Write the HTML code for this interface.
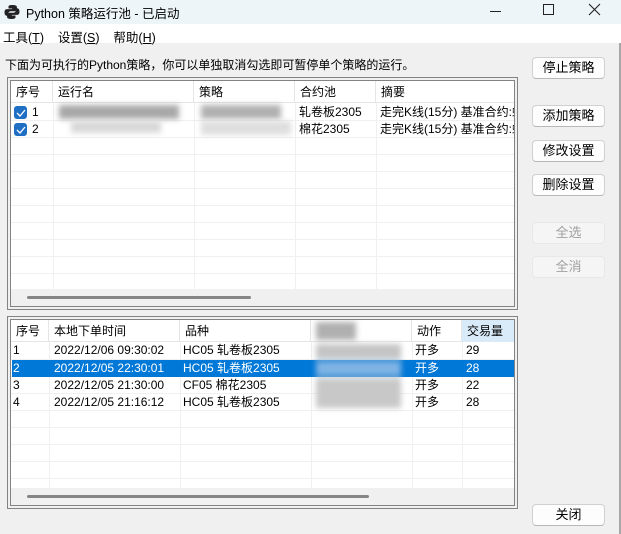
<!DOCTYPE html>
<html><head><meta charset="utf-8"><style>
*{margin:0;padding:0;box-sizing:border-box}
body{width:621px;height:534px;overflow:hidden;background:#f0f0f0;font-family:"Liberation Sans","Noto Sans CJK SC",sans-serif;font-size:12px;color:#000;position:relative}
.a{position:absolute;white-space:nowrap}
.title{left:0;top:0;width:621px;height:24px;background:#eef5f8}
.menu{left:0;top:24px;width:621px;height:19px;background:#fff}
.box{position:absolute;border:1px solid #838383;background:#f0f0f0}
.inner{position:absolute;left:2px;top:2px;right:2px;bottom:2px;border:1px solid #838383;background:#fff;overflow:hidden}
.hdr{position:absolute;left:0;top:0;height:22px;right:0;background:#fff;border-bottom:1px solid #e5e5e5}
.hc{position:absolute;top:0;height:22px;line-height:22px;padding-left:5px;border-right:1px solid #e5e5e5;white-space:nowrap}
.vl{position:absolute;top:22px;bottom:0;width:1px;background:#f0f0f0}
.hl{position:absolute;left:0;right:0;height:1px;background:#f0f0f0}
.cell{position:absolute;line-height:17px;white-space:nowrap}
.sb{position:absolute;left:0;right:0;bottom:0;height:17px;background:#f0f0f0}
.th{position:absolute;height:3px;top:7px;background:#858585;border-radius:2px}
.btn{position:absolute;left:532px;width:73px;height:22px;border:1px solid #d0d0d0;border-bottom-color:#b8b8b8;border-radius:4px;background:#fdfdfd;text-align:center;line-height:20px;font-size:13px}
.dis{color:#a0a0a0;background:#f5f5f5;border-color:#e8e8e8}
.cb{position:absolute;width:13px;height:13px;background:#1f6fc5;border-radius:3px}
.blur{position:absolute;filter:blur(3px)}
</style></head><body>
<div class="a title"></div>
<svg class="a" style="left:4px;top:4px" width="16" height="16" viewBox="0 0 16 16"><path d="M8 1C4 1 4.5 2.7 4.5 2.7V4.5h3.7v.6H3C1 5.1.5 6.8.5 8.5s.8 3.3 2.3 3.3h1.3V10c0-1.6 1.3-2.8 2.8-2.8h3.7c1.300 0 2.3-1 2.3-2.3V2.9C12.9 1.6 11.3 1 8 1z" fill="#222"/><path d="M8 15c4 0 3.5-1.7 3.5-1.7v-1.8H7.8v-.6H13c2 0 2.5-1.7 2.5-3.4s-.8-3.3-2.3-3.3h-1.3V6c0 1.6-1.3 2.8-2.8 2.8H5.4c-1.3 0-2.300 1-2.3 2.3v2c0 1.3 1.6 1.9 4.9 1.9z" fill="#222"/></svg>
<div class="a" style="left:26px;top:3px;font-size:12.5px">Python 策略运行池 - 已启动</div>
<div class="a" style="left:490px;top:11px;width:11px;height:1px;background:#222"></div>
<div class="a" style="left:543px;top:4px;width:11px;height:11px;border:1px solid #222"></div>
<svg class="a" style="left:588px;top:3px" width="13" height="13"><path d="M1 1L12 12M12 1L1 12" stroke="#222" stroke-width="1.1"/></svg>
<div class="a menu"></div>
<div class="a" style="left:3px;top:27px;font-size:12.5px">工具(<u>T</u>)&nbsp;&nbsp;&nbsp;&nbsp;设置(<u>S</u>)&nbsp;&nbsp;&nbsp;&nbsp;帮助(<u>H</u>)</div>
<div class="a" style="left:619px;top:43px;width:2px;height:491px;background:#a8a8a8"></div>
<div class="a" style="left:5px;top:56px;font-size:12px">下面为可执行的Python策略，你可以单独取消勾选即可暂停单个策略的运行。</div>

<div class="box" style="left:7px;top:77px;width:511px;height:233px"><div class="inner">
 <div class="hdr">
  <div class="hc" style="left:0;width:42px">序号</div>
  <div class="hc" style="left:42px;width:141px">运行名</div>
  <div class="hc" style="left:183px;width:101px">策略</div>
  <div class="hc" style="left:284px;width:81px">合约池</div>
  <div class="hc" style="left:365px;width:200px;border:0">摘要</div>
 </div>
 <div class="vl" style="left:42px"></div><div class="vl" style="left:183px"></div><div class="vl" style="left:284px"></div><div class="vl" style="left:365px"></div>
 <div class="hl" style="top:39px"></div><div class="hl" style="top:56px"></div><div class="hl" style="top:73px"></div><div class="hl" style="top:90px"></div><div class="hl" style="top:107px"></div><div class="hl" style="top:124px"></div><div class="hl" style="top:141px"></div><div class="hl" style="top:158px"></div><div class="hl" style="top:175px"></div><div class="hl" style="top:192px"></div>
 <div class="cb" style="left:3px;top:25px"></div><svg class="a" style="left:5px;top:28px" width="10" height="8"><path d="M1 4l3 3 5-6" stroke="#fff" stroke-width="1.3" fill="none"/></svg>
 <div class="cb" style="left:3px;top:42px"></div><svg class="a" style="left:5px;top:45px" width="10" height="8"><path d="M1 4l3 3 5-6" stroke="#fff" stroke-width="1.3" fill="none"/></svg>
 <div class="cell" style="left:21px;top:23px">1</div><div class="cell" style="left:21px;top:40px">2</div>
 <div class="blur" style="left:48px;top:24px;width:120px;height:14px;background:#a8a8a8"></div>
 <div class="blur" style="left:60px;top:40px;width:90px;height:12px;background:#d8d8d8"></div>
 <div class="blur" style="left:190px;top:24px;width:80px;height:14px;background:#b0b0b0"></div>
 <div class="blur" style="left:190px;top:40px;width:90px;height:14px;background:#dedede"></div>
 <div class="cell" style="left:288px;top:23px">轧卷板2305</div><div class="cell" style="left:288px;top:40px">棉花2305</div>
 <div class="cell" style="left:369px;top:23px">走完K线(15分) 基准合约:螺</div><div class="cell" style="left:369px;top:40px">走完K线(15分) 基准合约:螺</div>
 <div class="sb"><div class="th" style="left:16px;width:224px"></div></div>
</div></div>

<div class="box" style="left:7px;top:316px;width:511px;height:193px"><div class="inner">
 <div class="hdr">
  <div class="hc" style="left:0;width:38px">序号</div>
  <div class="hc" style="left:38px;width:131px">本地下单时间</div>
  <div class="hc" style="left:169px;width:131px">品种</div>
  <div class="hc" style="left:300px;width:101px"></div>
  <div class="hc" style="left:401px;width:50px">动作</div>
  <div class="hc" style="left:451px;width:60px;background:#d9ebf9;border:0">交易量</div>
 </div>
 <div class="vl" style="left:38px"></div><div class="vl" style="left:169px"></div><div class="vl" style="left:300px"></div><div class="vl" style="left:401px"></div><div class="vl" style="left:451px"></div>
 <div class="hl" style="top:39px"></div><div class="hl" style="top:56px"></div><div class="hl" style="top:73px"></div><div class="hl" style="top:90px"></div><div class="hl" style="top:107px"></div><div class="hl" style="top:124px"></div><div class="hl" style="top:141px"></div><div class="hl" style="top:158px"></div>
 <div class="a" style="left:1px;top:40px;width:504px;height:17px;background:#0078d7"></div>
 <div class="blur" style="left:305px;top:2px;width:40px;height:18px;background:#b0b0b0"></div>
 <div class="blur" style="left:305px;top:24px;width:85px;height:15px;background:#c4c4c4"></div>
 <div class="blur" style="left:305px;top:41px;width:85px;height:15px;background:#7fb3e4"></div>
 <div class="blur" style="left:305px;top:58px;width:85px;height:30px;background:#c8c8c8"></div>
 <div class="cell" style="left:2px;top:22px">1</div><div class="cell" style="left:2px;top:40px;color:#fff">2</div><div class="cell" style="left:2px;top:57px">3</div><div class="cell" style="left:2px;top:74px">4</div>
 <div class="cell" style="left:43px;top:22px">2022/12/06 09:30:02</div><div class="cell" style="left:43px;top:40px;color:#fff">2022/12/05 22:30:01</div><div class="cell" style="left:43px;top:57px">2022/12/05 21:30:00</div><div class="cell" style="left:43px;top:74px">2022/12/05 21:16:12</div>
 <div class="cell" style="left:172px;top:22px">HC05 轧卷板2305</div><div class="cell" style="left:172px;top:40px;color:#fff">HC05 轧卷板2305</div><div class="cell" style="left:172px;top:57px">CF05 棉花2305</div><div class="cell" style="left:172px;top:74px">HC05 轧卷板2305</div>
 <div class="cell" style="left:404px;top:22px">开多</div><div class="cell" style="left:404px;top:40px;color:#fff">开多</div><div class="cell" style="left:404px;top:57px">开多</div><div class="cell" style="left:404px;top:74px">开多</div>
 <div class="cell" style="left:455px;top:22px">29</div><div class="cell" style="left:455px;top:40px;color:#fff">28</div><div class="cell" style="left:455px;top:57px">22</div><div class="cell" style="left:455px;top:74px">28</div>
 <div class="sb"><div class="th" style="left:16px;width:342px"></div></div>
</div></div>

<div class="btn" style="top:57px">停止策略</div>
<div class="btn" style="top:105px">添加策略</div>
<div class="btn" style="top:140px">修改设置</div>
<div class="btn" style="top:174px">删除设置</div>
<div class="btn dis" style="top:222px">全选</div>
<div class="btn dis" style="top:256px">全消</div>
<div class="btn" style="top:504px">关闭</div>
</body></html>
